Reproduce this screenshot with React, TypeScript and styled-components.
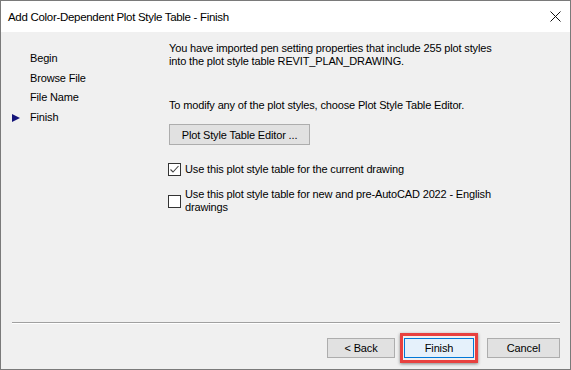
import styled, { createGlobalStyle } from 'styled-components';

const GlobalStyle = createGlobalStyle`
    html, body {
        margin: 0;
        padding: 0;
        background: #ffffff;
    }
    * {
        box-sizing: border-box;
    }
`;

const Window = styled.div`
    width: 571px;
    height: 370px;
    border: 1px solid #7a7a7a;
    display: flex;
    flex-direction: column;
    font-family: "Liberation Sans", Arial, sans-serif;
    font-size: 11px;
    letter-spacing: -0.15px;
    color: #000;
    overflow: hidden;
`;

const TitleBar = styled.div`
    height: 31px;
    flex: none;
    display: flex;
    align-items: center;
    justify-content: space-between;
    background: #ffffff;
    padding-left: 7px;
    padding-right: 9px;
    font-size: 11.5px;
    letter-spacing: -0.3px;
`;

const CloseIcon = styled.svg`
    width: 11px;
    height: 11px;
    display: block;
`;

const Body = styled.div`
    flex: 1;
    display: flex;
    flex-direction: column;
    background: #f0f0f0;
`;

const Main = styled.div`
    flex: 1;
    display: flex;
`;

const Sidebar = styled.ul`
    list-style: none;
    margin: 0;
    padding: 17px 0 0 0;
    width: 168px;
    flex: none;
`;

const Step = styled.li<{ $active?: boolean }>`
    position: relative;
    height: 19.5px;
    line-height: 19.5px;
    padding-left: 29px;

    &::before {
        content: '';
        display: ${p => (p.$active ? 'block' : 'none')};
        position: absolute;
        left: 11px;
        top: 6px;
        width: 0;
        height: 0;
        border-top: 4px solid transparent;
        border-bottom: 4px solid transparent;
        border-left: 8px solid #14147a;
    }
`;

const Content = styled.div`
    flex: 1;
    padding: 10px 0 0 0;
    display: flex;
    flex-direction: column;
    align-items: flex-start;
`;

const Para = styled.p<{ $gap?: number }>`
    margin: ${p => p.$gap ?? 0}px 0 0 0;
    line-height: 13px;
    width: 340px;
`;

const Button = styled.button<{ $width?: number }>`
    font-family: inherit;
    font-size: 11px;
    letter-spacing: inherit;
    color: #000;
    height: 20px;
    width: ${p => p.$width ?? 75}px;
    background: #e1e1e1;
    border: 1px solid #adadad;
    padding: 0;
    margin: 0;
`;

const EditorButton = styled(Button)`
    height: 21px;
    margin-top: 12px;
`;

const CheckRow = styled.label<{ $gap: number }>`
    display: flex;
    align-items: center;
    gap: 4px;
    margin-top: ${p => p.$gap}px;
    margin-left: -1px;
    line-height: 13px;
`;

const Box = styled.span`
    width: 13px;
    height: 13px;
    flex: none;
    background: #fff;
    border: 1px solid #333;
    display: flex;
    align-items: center;
    justify-content: center;
`;

const CheckLabel = styled.span`
    width: 320px;
`;

const Separator = styled.div`
    margin: 0 10px 0 11px;
    border-top: 1px solid #a0a0a0;
    border-bottom: 1px solid #ffffff;
`;

const Footer = styled.div`
    display: flex;
    justify-content: flex-end;
    align-items: center;
    padding: 14px 10px 11px 0;
`;

const FinishButton = styled(Button)`
    position: relative;
    background: #e5f1fb;
    border-color: #0078d7;
    margin: 0 13px 0 9px;

    &::after {
        content: '';
        position: absolute;
        left: -5px;
        right: -5px;
        top: -6px;
        bottom: -6px;
        border: 3px solid #e8413f;
        box-shadow: 0 1px 3px rgba(0, 0, 0, 0.45);
    }
`;

function Check({ checked }: { checked?: boolean }) {
    return (
        <Box>
            {checked && (
                <svg width="11" height="11" viewBox="0 0 11 11">
                    <path d="M1.5 5.5 L4 8 L9.5 2" fill="none" stroke="#444" strokeWidth="1.1" />
                </svg>
            )}
        </Box>
    );
}

export default function App() {
    return (
        <>
            <GlobalStyle />
            <Window>
                <TitleBar>
                    <span>Add Color-Dependent Plot Style Table - Finish</span>
                    <CloseIcon viewBox="0 0 11 11">
                        <path d="M0.5 0.5 L10.5 10.5 M10.5 0.5 L0.5 10.5" stroke="#111" strokeWidth="1" />
                    </CloseIcon>
                </TitleBar>
                <Body>
                    <Main>
                        <Sidebar>
                            <Step>Begin</Step>
                            <Step>Browse File</Step>
                            <Step>File Name</Step>
                            <Step $active>Finish</Step>
                        </Sidebar>
                        <Content>
                            <Para>
                                You have imported pen setting properties that include 255 plot styles into the plot style table REVIT_PLAN_DRAWING.
                            </Para>
                            <Para $gap={31}>To modify any of the plot styles, choose Plot Style Table Editor.</Para>
                            <EditorButton $width={141}>Plot Style Table Editor ...</EditorButton>
                            <CheckRow $gap={18}>
                                <Check checked />
                                <CheckLabel>Use this plot style table for the current drawing</CheckLabel>
                            </CheckRow>
                            <CheckRow $gap={12}>
                                <Check />
                                <CheckLabel>Use this plot style table for new and pre-AutoCAD 2022 - English drawings</CheckLabel>
                            </CheckRow>
                        </Content>
                    </Main>
                    <Separator />
                    <Footer>
                        <Button $width={68}>&lt; Back</Button>
                        <FinishButton $width={70}>Finish</FinishButton>
                        <Button $width={73}>Cancel</Button>
                    </Footer>
                </Body>
            </Window>
        </>
    );
}
